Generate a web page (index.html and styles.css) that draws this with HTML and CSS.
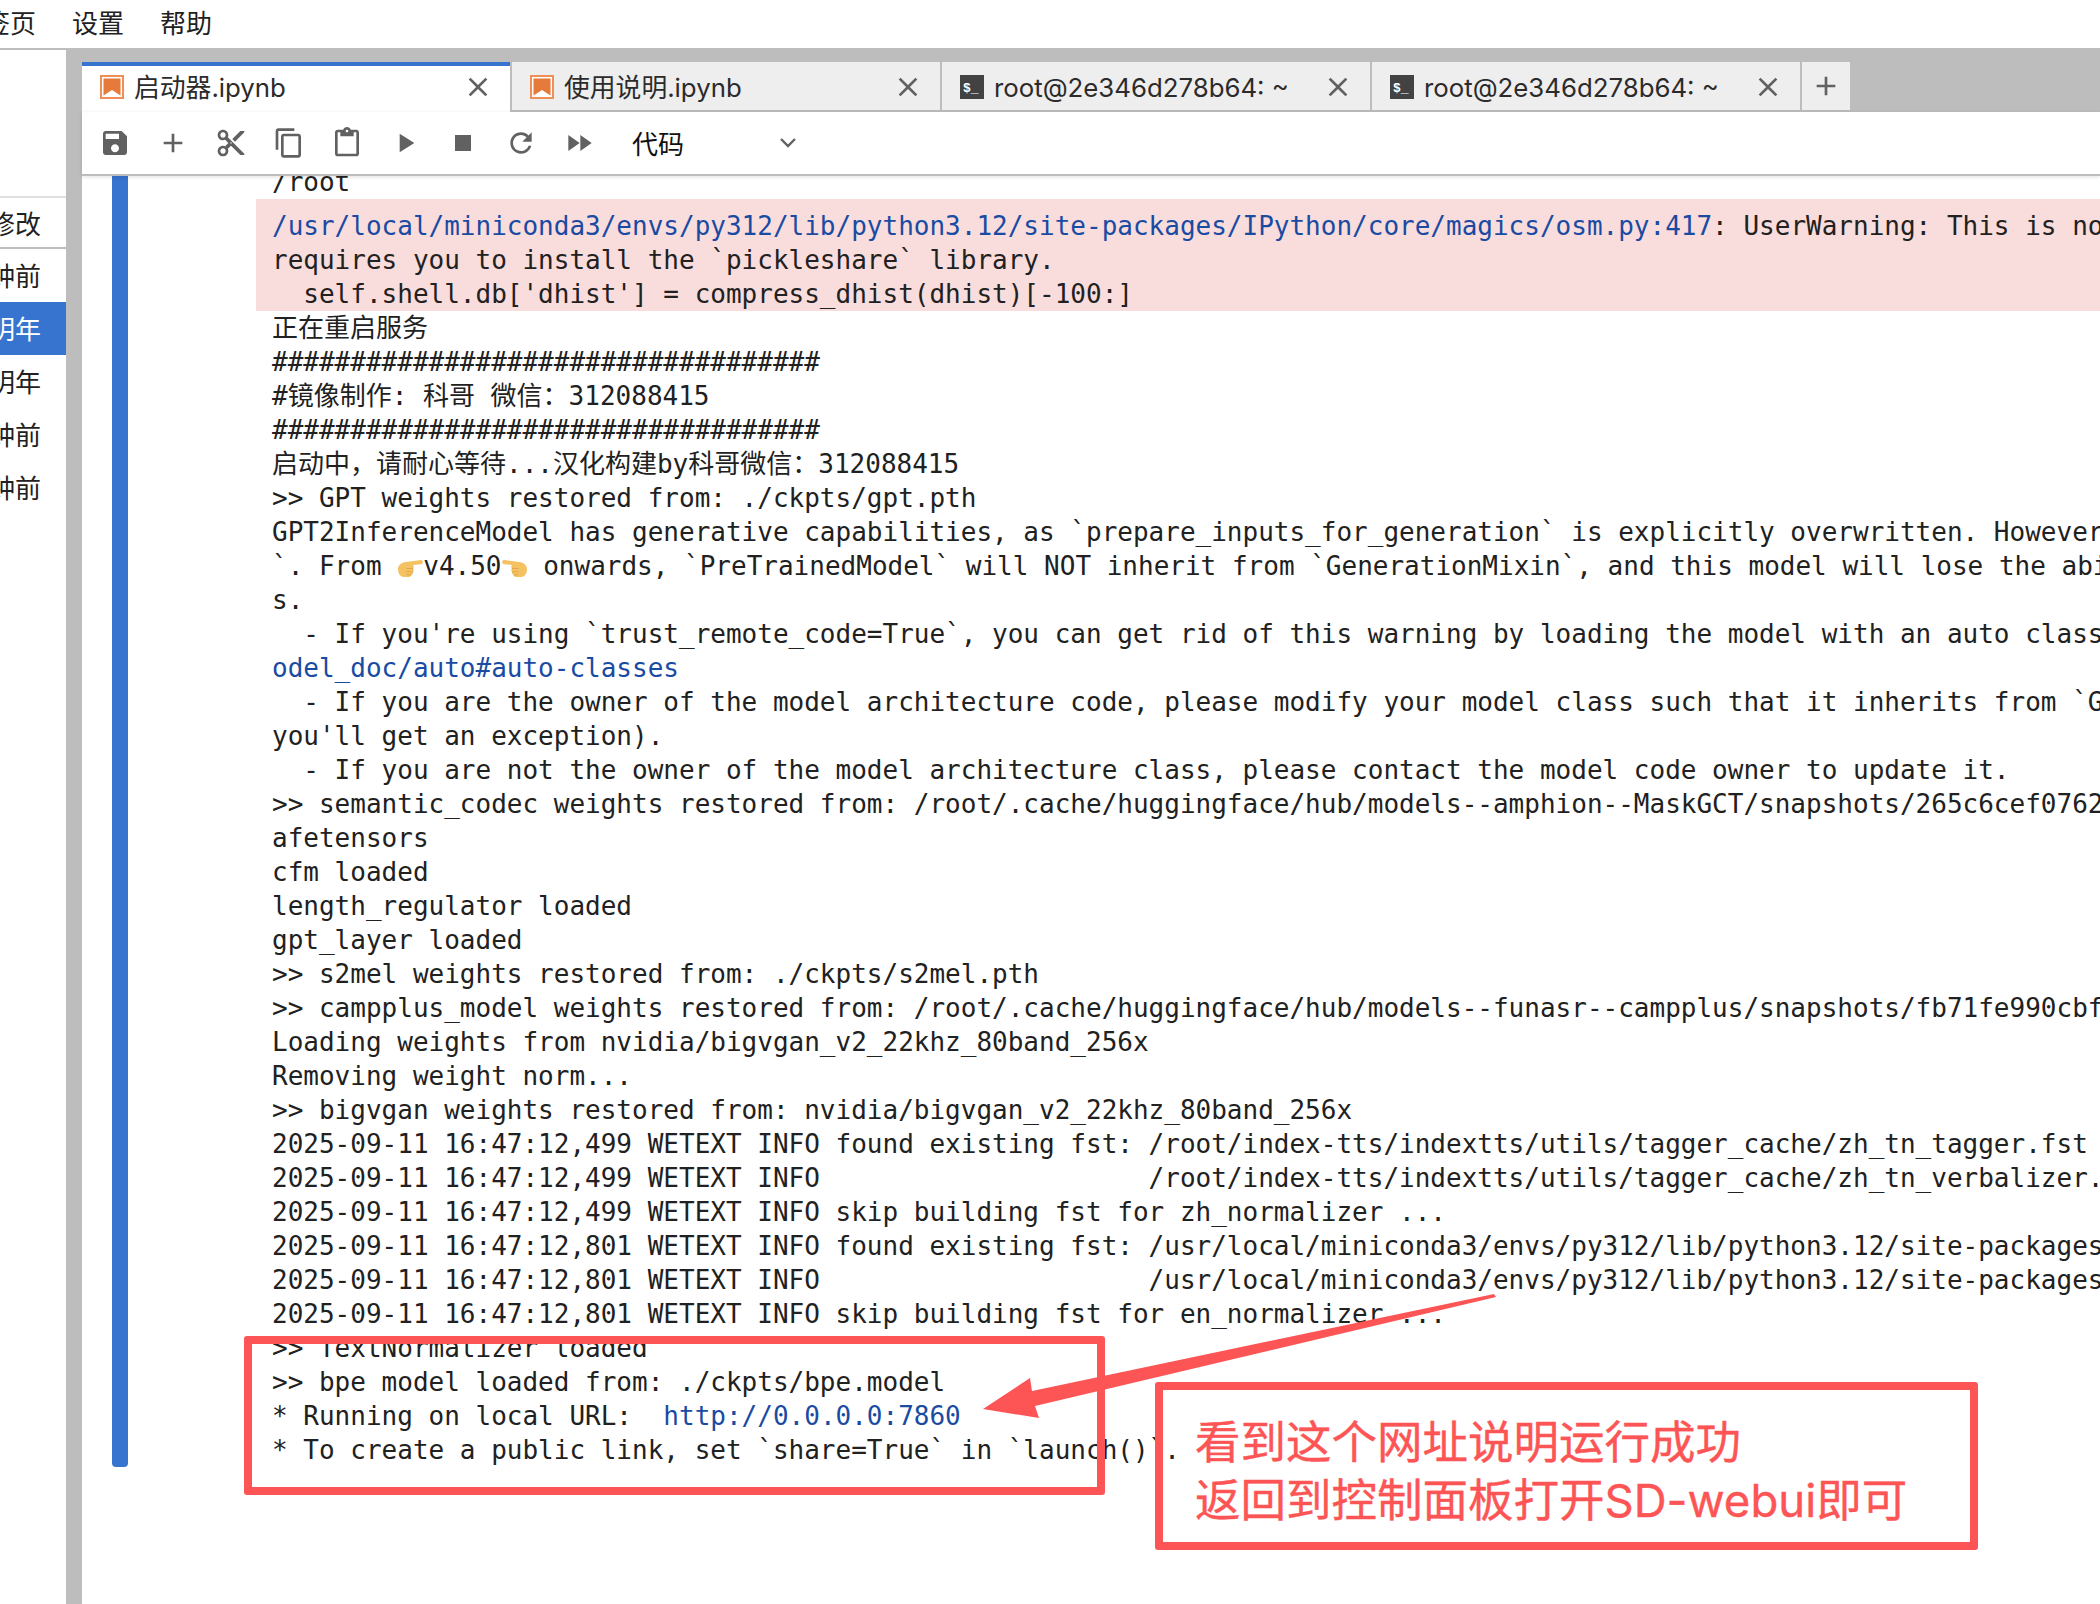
FILE: index.html
```html
<!DOCTYPE html>
<html lang="zh">
<head>
<meta charset="utf-8">
<title>启动器.ipynb</title>
<link rel="stylesheet" href="styles.css">
</head>
<body>
<svg width="0" height="0" class="defs">
  <symbol id="i-nb" viewBox="0 0 24 24"><rect x="1" y="1" width="22" height="22" fill="#fff" stroke="#ee8f58" stroke-width="2"/><path d="M3.5 3.5h17v17L12 15l-8.500 5.500z" fill="#e67a3a"/></symbol>
  <symbol id="i-term" viewBox="0 0 24 24"><rect width="24" height="24" fill="#424242"/><text x="3" y="17" class="term-glyph">$_</text></symbol>
  <symbol id="i-close" viewBox="0 0 24 24"><path d="M19 6.410L17.590 5 12 10.590 6.410 5 5 6.410 10.590 12 5 17.590 6.410 19 12 13.410 17.590 19 19 17.590 13.410 12z"/></symbol>
  <symbol id="i-plus" viewBox="0 0 24 24"><path d="M19 13h-6v6h-2v-6H5v-2h6V5h2v6h6v2z"/></symbol>
  <symbol id="i-hand" viewBox="0 0 26 26"><path d="M1 15C1 11 5 8 9 8L24 6C26.500 6 26.500 10 24 10.200L16 11C17 12 17 13.500 16.200 14.500C17 15.500 16.800 17 16 17.800C16.500 19 15.800 20.500 14.500 20.800C14.300 22 13.300 23 12 23L7 23C3.500 23 1 19.500 1 15z" fill="#f4c163"/><path d="M9.500 14.500H16M9.500 17.800H16M9.500 20.800H14.500" fill="none" stroke="#d99f45" stroke-width=".8"/></symbol>
</svg>

<header class="menu">
  <span class="menu-item">标签页</span>
  <span class="menu-item">设置</span>
  <span class="menu-item">帮助</span>
</header>

<div class="main">
  <aside class="side">
    <div class="side-top"></div>
    <div class="side-head">修改</div>
    <div class="side-row">分钟前</div>
    <div class="side-row selected">明年</div>
    <div class="side-row">明年</div>
    <div class="side-row">分钟前</div>
    <div class="side-row">分钟前</div>
  </aside>

  <section class="panel">
    <div class="tabs">
      <div class="tab active">
        <svg class="tab-icon"><use href="#i-nb"/></svg>
        <span class="tab-label">启动器.ipynb</span>
        <svg class="tab-close"><use href="#i-close"/></svg>
      </div>
      <div class="tab">
        <svg class="tab-icon"><use href="#i-nb"/></svg>
        <span class="tab-label">使用说明.ipynb</span>
        <svg class="tab-close"><use href="#i-close"/></svg>
      </div>
      <div class="tab">
        <svg class="tab-icon"><use href="#i-term"/></svg>
        <span class="tab-label">root@2e346d278b64: ~</span>
        <svg class="tab-close"><use href="#i-close"/></svg>
      </div>
      <div class="tab">
        <svg class="tab-icon"><use href="#i-term"/></svg>
        <span class="tab-label">root@2e346d278b64: ~</span>
        <svg class="tab-close"><use href="#i-close"/></svg>
      </div>
      <div class="tab-add"><svg class="tab-plus"><use href="#i-plus"/></svg></div>
    </div>

    <div class="toolbar">
      <button class="tool"><svg viewBox="0 0 24 24"><path d="M17 3H5c-1.110 0-2 .9-2 2v14c0 1.100.89 2 2 2h14c1.100 0 2-.9 2-2V7l-4-4zm-5 16c-1.660 0-3-1.340-3-3s1.340-3 3-3 3 1.340 3 3-1.340 3-3 3zm3-10H5V5h10v4z"/></svg></button>
      <button class="tool"><svg viewBox="0 0 24 24"><path d="M19 13h-6v6h-2v-6H5v-2h6V5h2v6h6v2z"/></svg></button>
      <button class="tool"><svg viewBox="0 0 24 24"><path d="M9.640 7.640c.23-.5.36-1.050.36-1.640 0-2.210-1.790-4-4-4S2 3.790 2 6s1.790 4 4 4c.59 0 1.140-.13 1.640-.36L10 12l-2.360 2.360C7.140 14.130 6.590 14 6 14c-2.210 0-4 1.790-4 4s1.790 4 4 4 4-1.790 4-4c0-.59-.13-1.140-.36-1.640L12 14l7 7h3v-1L9.640 7.640zM6 8c-1.100 0-2-.89-2-2s.9-2 2-2 2 .89 2 2-.9 2-2 2zm0 12c-1.100 0-2-.89-2-2s.9-2 2-2 2 .89 2 2-.9 2-2 2zm6-7.500c-.28 0-.5-.22-.5-.5s.22-.5.5-.5.5.22.5.5-.22.5-.5.5zM19 3l-6 6 2 2 7-7V3z"/></svg></button>
      <button class="tool"><svg viewBox="0 0 24 24"><path d="M16 1H4c-1.100 0-2 .9-2 2v14h2V3h12V1zm3 4H8c-1.100 0-2 .9-2 2v14c0 1.100.9 2 2 2h11c1.100 0 2-.9 2-2V7c0-1.100-.9-2-2-2zm0 16H8V7h11v14z"/></svg></button>
      <button class="tool"><svg viewBox="0 0 24 24"><path d="M19 2h-4.180C14.400.84 13.300 0 12 0c-1.300 0-2.400.84-2.820 2H5c-1.100 0-2 .9-2 2v16c0 1.100.9 2 2 2h14c1.100 0 2-.9 2-2V4c0-1.100-.9-2-2-2zm-7 0c.55 0 1 .45 1 1s-.45 1-1 1-1-.45-1-1 .45-1 1-1zm7 18H5V4h2v3h10V4h2v16z"/></svg></button>
      <button class="tool"><svg viewBox="0 0 24 24"><path d="M8 5v14l11-7z"/></svg></button>
      <button class="tool"><svg viewBox="0 0 24 24"><path d="M6 6h12v12H6z"/></svg></button>
      <button class="tool"><svg viewBox="0 0 24 24"><path d="M17.650 6.350C16.200 4.900 14.210 4 12 4c-4.420 0-7.990 3.580-7.990 8s3.570 8 7.990 8c3.730 0 6.840-2.550 7.730-6h-2.080c-.82 2.330-3.040 4-5.650 4-3.310 0-6-2.690-6-6s2.690-6 6-6c1.660 0 3.140.69 4.220 1.780L13 11h7V4l-2.350 2.350z"/></svg></button>
      <button class="tool"><svg viewBox="0 0 24 24"><path d="M4 18l8.500-6L4 6v12zm9-12v12l8.500-6L13 6z"/></svg></button>
      <div class="cell-type">
        <span class="cell-type-label">代码</span>
        <svg class="chevron" viewBox="0 0 18 12"><path d="M2 2l7 7 7-7" fill="none" stroke="#616161" stroke-width="2.400"/></svg>
      </div>
    </div>

    <div class="notebook">
      <div class="cell">
        <div class="collapser"></div>
        <div class="output">
          <div class="line">/root</div>
          <div class="stderr">
            <div class="line"><span class="link">/usr/local/miniconda3/envs/py312/lib/python3.12/site-packages/IPython/core/magics/osm.py:417</span>: UserWarning: This is now an optional IPython functionality, using bookm</div>
            <div class="line">requires you to install the `pickleshare` library.</div>
            <div class="line">  self.shell.db['dhist'] = compress_dhist(dhist)[-100:]</div>
          </div>
          <div class="line">正在重启服务</div>
          <div class="line">###################################</div>
          <div class="line">#镜像制作: 科哥 微信：312088415</div>
          <div class="line">###################################</div>
          <div class="line">启动中，请耐心等待...汉化构建by科哥微信：312088415</div>
          <div class="line">&gt;&gt; GPT weights restored from: ./ckpts/gpt.pth</div>
          <div class="line">GPT2InferenceModel has generative capabilities, as `prepare_inputs_for_generation` is explicitly overwritten. However, it doesn't directly inherit from `GenerationMixin</div>
          <div class="line">`. From <svg class="hand"><use href="#i-hand"/></svg>v4.50<svg class="hand flip"><use href="#i-hand"/></svg> onwards, `PreTrainedModel` will NOT inherit from `GenerationMixin`, and this model will lose the ability to call `generate` and other related function</div>
          <div class="line">s.</div>
          <div class="line">  - If you're using `trust_remote_code=True`, you can get rid of this warning by loading the model with an auto class. See https://huggingface.co/docs/transformers/en/m</div>
          <div class="line"><span class="link">odel_doc/auto#auto-classes</span></div>
          <div class="line">  - If you are the owner of the model architecture code, please modify your model class such that it inherits from `GenerationMixin` (after `PreTrainedModel`, otherwise</div>
          <div class="line">you'll get an exception).</div>
          <div class="line">  - If you are not the owner of the model architecture class, please contact the model code owner to update it.</div>
          <div class="line">&gt;&gt; semantic_codec weights restored from: /root/.cache/huggingface/hub/models--amphion--MaskGCT/snapshots/265c6cef07625665d0c28d2faafb1415562379dc/semantic_codec/model.s</div>
          <div class="line">afetensors</div>
          <div class="line">cfm loaded</div>
          <div class="line">length_regulator loaded</div>
          <div class="line">gpt_layer loaded</div>
          <div class="line">&gt;&gt; s2mel weights restored from: ./ckpts/s2mel.pth</div>
          <div class="line">&gt;&gt; campplus_model weights restored from: /root/.cache/huggingface/hub/models--funasr--campplus/snapshots/fb71fe990cbf0f3a1e1e2c4a5e6d7f8b9c0d1e2f/campplus_cn_common.bin</div>
          <div class="line">Loading weights from nvidia/bigvgan_v2_22khz_80band_256x</div>
          <div class="line">Removing weight norm...</div>
          <div class="line">&gt;&gt; bigvgan weights restored from: nvidia/bigvgan_v2_22khz_80band_256x</div>
          <div class="line">2025-09-11 16:47:12,499 WETEXT INFO found existing fst: /root/index-tts/indextts/utils/tagger_cache/zh_tn_tagger.fst</div>
          <div class="line">2025-09-11 16:47:12,499 WETEXT INFO                     /root/index-tts/indextts/utils/tagger_cache/zh_tn_verbalizer.fst</div>
          <div class="line">2025-09-11 16:47:12,499 WETEXT INFO skip building fst for zh_normalizer ...</div>
          <div class="line">2025-09-11 16:47:12,801 WETEXT INFO found existing fst: /usr/local/miniconda3/envs/py312/lib/python3.12/site-packages/tn/en_tn_tagger.fst</div>
          <div class="line">2025-09-11 16:47:12,801 WETEXT INFO                     /usr/local/miniconda3/envs/py312/lib/python3.12/site-packages/tn/en_tn_verbalizer.fst</div>
          <div class="line">2025-09-11 16:47:12,801 WETEXT INFO skip building fst for en_normalizer ...</div>
          <div class="line">&gt;&gt; TextNormalizer loaded</div>
          <div class="line">&gt;&gt; bpe model loaded from: ./ckpts/bpe.model</div>
          <div class="line">* Running on local URL:  <span class="link">http://0.0.0.0:7860</span></div>
          <div class="line">* To create a public link, set `share=True` in `launch()`.</div>
        </div>
      </div>
    </div>
  </section>
</div>

<div class="mark mark-url"></div>
<svg class="mark-arrow" viewBox="0 0 2100 1604"><polygon points="983,1409 1030,1378 1032,1391 1494,1294 1496,1297 1035,1406 1039,1418"/></svg>
<div class="mark mark-note">
  <div>看到这个网址说明运行成功</div>
  <div>返回到控制面板打开SD-webui即可</div>
</div>
</body>
</html>
```

FILE: styles.css
```css
* { box-sizing: border-box; }

html, body { margin: 0; height: 100%; }

body {
  position: relative;
  display: flex;
  flex-direction: column;
  height: 1604px;
  overflow: hidden;
  background: #fff;
  color: #212121;
  font-family: "Inter", "Noto Sans CJK SC", sans-serif;
  font-size: 26px;
}

.defs { position: absolute; }

.term-glyph {
  font-family: "Liberation Mono", monospace;
  font-size: 13px;
  font-weight: 700;
  fill: #fff;
}

/* top menu */
.menu {
  display: flex;
  flex: none;
  gap: 36px;
  align-items: center;
  height: 50px;
  margin-left: -42px;
  padding-bottom: 6px;
  border-bottom: 2px solid #bdbdbd;
  font-size: 26px;
}

.main { display: flex; flex: 1; min-height: 0; background: #bdbdbd; }

/* side file list */
.side {
  flex: none;
  width: 66px;
  margin-right: 16px;
  background: #fff;
  overflow: hidden;
}

.side-top { height: 148px; border-bottom: 2px solid #e0e0e0; }

.side-head,
.side-row {
  display: flex;
  justify-content: flex-end;
  align-items: center;
  padding-right: 25px;
  white-space: nowrap;
}

.side-head { height: 51px; border-bottom: 2px solid #bdbdbd; }
.side-row { height: 53px; padding-bottom: 2px; }
.side-row.selected { background: #3674cf; color: #fff; }

/* main panel */
.panel {
  display: flex;
  flex: 1;
  flex-direction: column;
  min-width: 0;
  background: #fff;
}

.tabs {
  display: flex;
  flex: none;
  height: 62px;
  padding-top: 12px;
  background: #bdbdbd;
}

.tab {
  display: flex;
  align-items: center;
  gap: 10px;
  width: 430px;
  height: 48px;
  padding: 2px 23px 0 18px;
  border-left: 2px solid #bdbdbd;
  background: #eee;
}

.tab.active {
  width: 428px;
  height: 50px;
  padding-top: 0;
  padding-bottom: 4px;
  border-left: 0;
  border-top: 4px solid #3674cf;
  background: #fff;
}

.tab-icon { flex: none; width: 24px; height: 24px; }

.tab-label {
  flex: 1;
  padding-top: 2px;
  font-size: 25.8px;
  line-height: 32px;
  white-space: nowrap;
  color: #2b2b2b;
}

.tab-close { flex: none; width: 32px; height: 32px; margin: 0 -7px; fill: #616161; }

.tab-add {
  display: flex;
  justify-content: center;
  align-items: center;
  width: 50px;
  height: 48px;
  border-left: 2px solid #bdbdbd;
  background: #eee;
}

.tab-plus { width: 32px; height: 32px; fill: #616161; }

/* toolbar */
.toolbar {
  position: relative;
  z-index: 1;
  display: flex;
  flex: none;
  align-items: center;
  height: 64px;
  padding-left: 4px;
  border-bottom: 2px solid #bdbdbd;
  background: #fff;
  box-shadow: 0 1px 4px rgba(0, 0, 0, .12);
}

.tool {
  display: flex;
  justify-content: center;
  align-items: center;
  width: 58px;
  height: 40px;
  padding: 0;
  border: 0;
  background: none;
}

.tool svg { width: 32px; height: 32px; fill: #616161; }

.cell-type {
  display: flex;
  justify-content: space-between;
  align-items: center;
  width: 165px;
  margin-left: 24px;
  color: #111;
}

.cell-type-label { padding-bottom: 2px; }

.chevron { width: 18px; height: 12px; }

/* notebook */
.notebook { flex: 1; min-height: 0; overflow: hidden; padding-left: 30px; }

.cell { display: flex; }

.collapser {
  flex: none;
  width: 16px;
  border-radius: 0 0 4px 4px;
  background: #3674cf;
}

.output {
  flex: 1;
  min-width: 0;
  margin: -11px 0 0 128px;
  overflow: hidden;
  font-family: "DejaVu Sans Mono", "Noto Sans CJK SC", monospace;
  font-size: 26px;
}

.line {
  height: 34px;
  padding-left: 16px;
  line-height: 34px;
  white-space: pre;
  color: #212121;
}

.stderr {
  height: 112px;
  padding-top: 10px;
  background: #f9dcdc;
}

.link { color: #1a4ba3; }

.hand { width: 26px; height: 26px; vertical-align: -5px; }
.hand.flip { transform: scaleX(-1); }

/* red annotations drawn over the screenshot */
.mark {
  position: absolute;
  border: 8px solid #fd5555;
  border-radius: 3px;
}

.mark-url { left: 244px; top: 1336px; width: 861px; height: 159px; }

.mark-note {
  left: 1155px;
  top: 1382px;
  width: 823px;
  height: 168px;
  padding: 24px 0 0 32px;
  color: #fd5555;
  font-size: 45.5px;
  line-height: 58px;
  white-space: nowrap;
  -webkit-text-stroke: .4px #fd5555;
}

.mark-arrow {
  position: absolute;
  left: 0;
  top: 0;
  width: 2100px;
  height: 1604px;
  fill: #fd5555;
  pointer-events: none;
}
```
